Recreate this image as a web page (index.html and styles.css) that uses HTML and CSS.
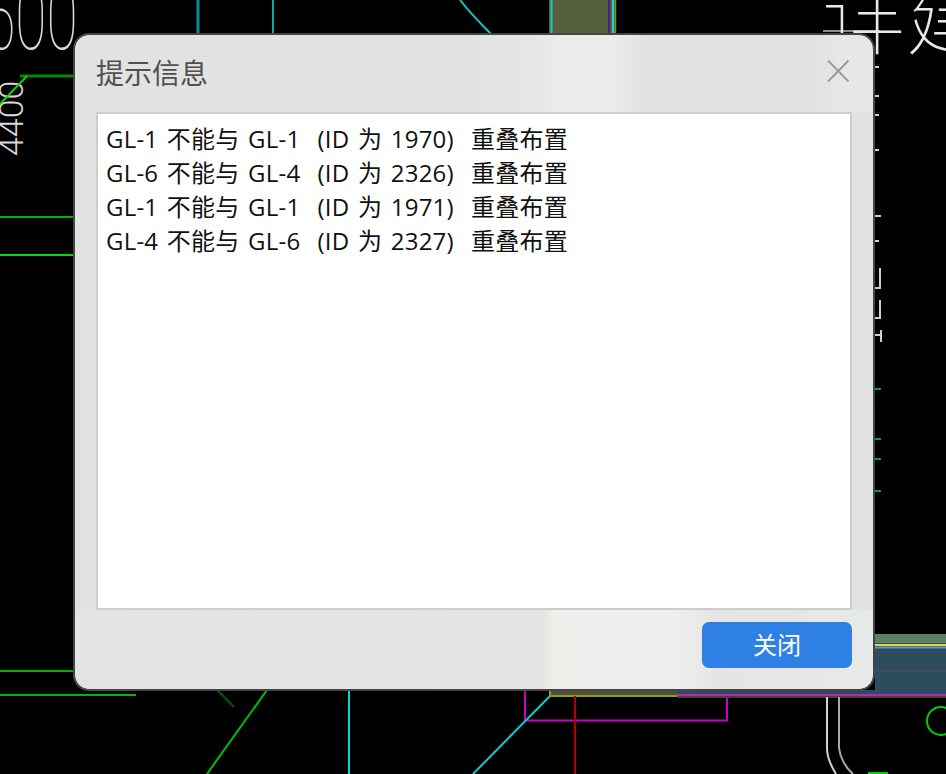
FILE: index.html
```html
<!DOCTYPE html>
<html lang="zh">
<head>
<meta charset="utf-8">
<title>提示信息</title>
<link rel="stylesheet" href="styles.css">
</head>
<body>
<svg class="canvas" width="946" height="774" viewBox="0 0 946 774" aria-hidden="true">
  <rect x="549" y="0" width="66" height="34" fill="#56603a"/>
  <path d="M551.500 0V34" stroke="#18c8c8" stroke-width="2" fill="none"/>
  <path d="M609 0V34" stroke="#4b1f8a" stroke-width="2" fill="none"/>
  <path d="M613 0V34" stroke="#10d8d8" stroke-width="2" fill="none"/>
  <path d="M615.500 0V34" stroke="#8f8f1c" stroke-width="1.500" fill="none"/>
  <path d="M198 0V34" stroke="#0a8f8f" stroke-width="3" fill="none"/>
  <path d="M273 0V34" stroke="#0aa8a8" stroke-width="2" fill="none"/>
  <path d="M460 0C470 13 480 23 491 34" stroke="#10c8c8" stroke-width="2" fill="none"/>
  <path d="M20 76H74" stroke="#008a00" stroke-width="3" fill="none"/>
  <path d="M0 217H74" stroke="#00b400" stroke-width="2" fill="none"/>
  <path d="M0 255H74" stroke="#00dc00" stroke-width="2" fill="none"/>
  <path d="M0 671H74" stroke="#00b400" stroke-width="2" fill="none"/>
  <path d="M0 695H136" stroke="#00b400" stroke-width="2" fill="none"/>
  <path d="M217 690L234 707" stroke="#005a00" stroke-width="2" fill="none"/>
  <path d="M267 690L207 774" stroke="#00c000" stroke-width="2" fill="none"/>
  <path d="M349 690V774" stroke="#00d8d8" stroke-width="2" fill="none"/>
  <rect x="550" y="690" width="127" height="6" fill="#4a5438"/>
  <path d="M550 690V696H677" stroke="#9a9a20" stroke-width="2" fill="none"/>
  <path d="M525 690V720.500H727V696" stroke="#c800c8" stroke-width="2" fill="none"/>
  <path d="M550 696L473 774" stroke="#10c8c8" stroke-width="2" fill="none"/>
  <path d="M575 696V774" stroke="#b00000" stroke-width="2" fill="none"/>
  <rect x="875" y="634" width="71" height="60" fill="#2b4d5e"/>
  <rect x="875" y="634" width="71" height="9" fill="#5c8060"/>
  <path d="M875 645H946" stroke="#d8d840" stroke-width="2" fill="none"/>
  <path d="M875 647.500H946" stroke="#7090c0" stroke-width="2" fill="none"/>
  <path d="M875 671H946" stroke="#5a4a5c" stroke-width="1" fill="none"/>
  <rect x="677" y="690" width="269" height="6" fill="#2b4d5e"/>
  <path d="M677 695H946" stroke="#c020c0" stroke-width="2" fill="none"/>
  <rect x="677" y="696" width="269" height="2" fill="#3a4a30"/>
  <path d="M827 697V748C827 758 831 766 836 774" stroke="#d0d0d0" stroke-width="2" fill="none"/>
  <path d="M839 697V748C840 758 846 768 853 774" stroke="#a8a8a8" stroke-width="2" fill="none"/>
  <circle cx="941" cy="721" r="14" stroke="#00d000" stroke-width="2" fill="none"/>
  <rect x="868" y="772" width="20" height="2" fill="#00d000"/>
  <path d="M875 67H879M875 96H879M875 115H879M875 150H879M875 216H881M875 241H879M875 288H881M880 268V288M875 318H881M880 300V318M875 335H881M881 330V342" stroke="#cfcfcf" stroke-width="2" fill="none"/>
  <path d="M875 389H881M875 439H881M875 459H881M875 491H881" stroke="#088f8f" stroke-width="2" fill="none"/>
  <path d="M823 31H880" stroke="#bbb" stroke-width="1.500" fill="none"/>
  <text class="cad-num cad-num-thin" transform="translate(-16 49) scale(1 1.600)" font-size="57">500</text>
  <text class="cad-num" transform="translate(23 156) rotate(-90)" font-size="34">4400</text>
  <path d="M27 76L0 104" stroke="#10d010" stroke-width="2" fill="none"/>
  <text class="cad-cjk" x="822" y="48" font-size="84">详建</text>
</svg>

<div class="dialog" role="dialog">
  <header class="head">
    <h1 class="title">提示信息</h1>
    <button class="close" type="button" aria-label="关闭">
      <svg width="24" height="24" viewBox="0 0 24 24"><path d="M2 1.500L22.500 22.500M22.500 1.500L2 22.500" stroke="#9a9a9a" stroke-width="1.800" fill="none"/></svg>
    </button>
  </header>
  <div class="messages">
    <p class="msg">GL-1 不能与 GL-1  (ID 为 1970)  重叠布置</p>
    <p class="msg">GL-6 不能与 GL-4  (ID 为 2326)  重叠布置</p>
    <p class="msg">GL-1 不能与 GL-1  (ID 为 1971)  重叠布置</p>
    <p class="msg">GL-4 不能与 GL-6  (ID 为 2327)  重叠布置</p>
  </div>
  <footer class="foot">
    <button class="primary" type="button">关闭</button>
  </footer>
</div>
</body>
</html>
```
FILE: styles.css
```css
* { box-sizing: border-box; }
html, body { margin: 0; height: 100%; }
body {
  position: relative;
  width: 946px;
  height: 774px;
  overflow: hidden;
  background: #000;
  font-family: "Open Sans", "Noto Sans CJK SC", sans-serif;
}
.canvas { position: absolute; left: 0; top: 0; display: block; }
.cad-num {
  font-family: Roboto, sans-serif;
  font-weight: 300;
  fill: #d8d8d8;
}
.cad-num-thin { font-weight: 100; }
.cad-cjk {
  font-family: "Noto Sans CJK SC", sans-serif;
  font-weight: 100;
  fill: #e8e8e8;
}
.dialog {
  position: absolute;
  left: 73px;
  top: 33px;
  width: 802px;
  height: 658px;
  display: flex;
  flex-direction: column;
  padding: 0 21px;
  border: 2px solid #454545;
  border-radius: 16px;
  background:
    linear-gradient(90deg, #e2e2e2 400px, #e4e6e6 420px, #e5e7e7 460px, #ebebe9 480px, #ececea 535px, #e2e2e2 570px, #e2e2e2 740px, #e7e7e7 770px) 0 0 / 100% 77px no-repeat,
    linear-gradient(90deg, #e2e3e2 0, #e3e4e3 455px, #e4e4e4 468px, #eef0ec 478px, #eff0ee 600px, #e4e5e4 640px, #e7e9e9 798px) 0 100% / 100% 80px no-repeat,
    #e2e2e2;
  background-clip: padding-box;
}
.head {
  height: 77px;
  display: flex;
  align-items: flex-start;
  justify-content: space-between;
  flex: none;
}
.title {
  margin: 19px 0 0;
  font-size: 28px;
  line-height: 38px;
  font-weight: 400;
  color: #505050;
}
.close {
  margin: 24px 2px 0 0;
  padding: 0;
  width: 24px;
  height: 24px;
  border: 0;
  background: none;
  display: block;
}
.close svg { display: block; }
.messages {
  flex: none;
  height: 498px;
  padding: 8px 8px;
  background: #fff;
  border: 2px solid #cdcdcd;
}
.msg {
  margin: 0;
  font-size: 24px;
  line-height: 34px;
  color: #111;
  white-space: pre;
  letter-spacing: 0.2px;
  word-spacing: 2.2px;
}
.foot {
  display: flex;
  justify-content: flex-end;
  padding-top: 12px;
}
.primary {
  width: 150px;
  height: 46px;
  border: 0;
  border-radius: 7px;
  background: #2f80e4;
  color: #fff;
  font-family: inherit;
  font-size: 24px;
  line-height: 46px;
  padding: 0;
}
```
